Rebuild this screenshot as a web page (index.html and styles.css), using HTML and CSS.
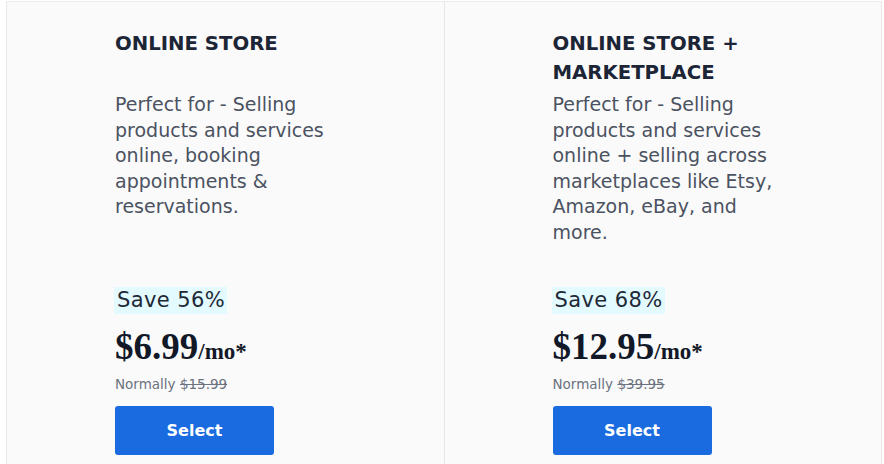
FILE: index.html
```html
<!DOCTYPE html>
<html lang="en">
<head>
<meta charset="utf-8">
<title>Plans</title>
<link rel="stylesheet" href="styles.css">
</head>
<body>
<div class="plans">
  <section class="plan">
    <h2 class="plan-title">ONLINE STORE</h2>
    <p class="plan-desc">Perfect for - Selling products and services online, booking appointments &amp; reservations.</p>
    <div class="plan-save"><span>Save 56%</span></div>
    <div class="plan-price"><span class="amount">$6.99</span><span class="per">/mo*</span></div>
    <div class="plan-normal">Normally <s>$15.99</s></div>
    <button class="plan-btn">Select</button>
  </section>
  <section class="plan">
    <h2 class="plan-title">ONLINE STORE + MARKETPLACE</h2>
    <p class="plan-desc">Perfect for - Selling products and services online + selling across marketplaces like Etsy, Amazon, eBay, and more.</p>
    <div class="plan-save"><span>Save 68%</span></div>
    <div class="plan-price"><span class="amount">$12.95</span><span class="per">/mo*</span></div>
    <div class="plan-normal">Normally <s>$39.95</s></div>
    <button class="plan-btn">Select</button>
  </section>
</div>
</body>
</html>
```
FILE: styles.css
```css
html, body {
  margin: 0;
  padding: 0;
  background: #ffffff;
}
body {
  font-family: "DejaVu Sans", "Open Sans", sans-serif;
  width: 884px;
  height: 464px;
  overflow: hidden;
}
.plans {
  display: flex;
  margin: 1px 2px 0 6px;
  border-top: 1px solid #ebebeb;
}
.plan {
  flex: 1;
  background: #fafafa;
  border-left: 1px solid #e8e8e8;
  border-right: 1px solid #e8e8e8;
  padding: 0 0 20px 108px;
  height: 480px;
  box-sizing: border-box;
  display: flex;
  flex-direction: column;
  align-items: flex-start;
}
.plan + .plan {
  margin-left: -1px;
}
.plan-title {
  margin: 27px 0 0;
  font-size: 19.7px;
  line-height: 29px;
  font-weight: 700;
  color: #1c2536;
  width: 240px;
  min-height: 58px;
}
.plan-desc {
  margin: 5px 0 0;
  font-size: 19px;
  line-height: 25.5px;
  color: #4b5261;
  width: 230px;
  min-height: 195px;
}
.plan-save span {
  display: inline-block;
  background: #e3fbff;
  color: #1f2937;
  font-size: 21px;
  letter-spacing: 0.4px;
  line-height: 27px;
  padding: 0 2px 0 3px;
  margin-left: -1px;
}
.plan-price {
  margin-top: 13px;
  font-family: "Liberation Serif", "Times New Roman", serif;
  font-weight: 700;
  color: #111827;
  line-height: 40px;
}
.amount {
  font-size: 37px;
}
.per {
  font-size: 23px;
}
.plan-normal {
  margin-top: 2px;
  font-size: 13.5px;
  color: #6b7280;
}
.plan-normal s {
  color: #6b7280;
}
.plan-btn {
  margin-top: 14px;
  width: 159px;
  height: 49px;
  background: #1a6be0;
  color: #ffffff;
  border: none;
  border-radius: 3px;
  font-family: "DejaVu Sans", "Open Sans", sans-serif;
  font-size: 16px;
  font-weight: 700;
  cursor: pointer;
}
```
